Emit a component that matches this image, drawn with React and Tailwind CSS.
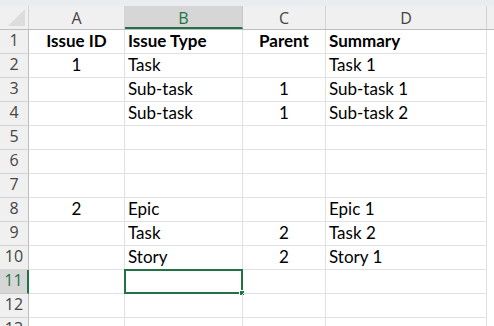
import React from "react";

const cols = [
  { key: "A", w: "w-[96px]", align: "justify-center" },
  { key: "B", w: "w-[118px]", align: "justify-start pl-[3px]" },
  { key: "C", w: "w-[83px]", align: "justify-center" },
  { key: "D", w: "w-[161px]", align: "justify-start pl-[3px]" },
];

const rows = [
  ["Issue ID", "Issue Type", "Parent", "Summary"],
  ["1", "Task", "", "Task 1"],
  ["", "Sub-task", "1", "Sub-task 1"],
  ["", "Sub-task", "1", "Sub-task 2"],
  ["", "", "", ""],
  ["", "", "", ""],
  ["", "", "", ""],
  ["2", "Epic", "", "Epic 1"],
  ["", "Task", "2", "Task 2"],
  ["", "Story", "2", "Story 1"],
  ["", "", "", ""],
  ["", "", "", ""],
  ["", "", "", ""],
];

const App = () => {
  return (
    <div
      className="w-[494px] h-[326px] overflow-hidden bg-white text-black"
      style={{ fontFamily: "Lato, 'Liberation Sans', sans-serif" }}
    >
      <div className="h-[6px] bg-[#e9edf1]" />
      {/* column headers */}
      <div className="flex h-[24px] bg-[#f0f0f0] border-b border-[#bdbdbd]">
        <div className="w-[29px] shrink-0 border-r border-[#d4d4d4] relative">
          <div className="absolute right-[3px] bottom-[3px] w-0 h-0 border-l-[17px] border-l-transparent border-b-[17px] border-b-[#dcdcdc]" />
        </div>
        {cols.map((c) =>
          c.key === "B" ? (
            <div
              key={c.key}
              className={`${c.w} shrink-0 flex items-center justify-center bg-[#d6d6d6] border-r border-[#c8c8c8] border-b-2 border-b-[#217346] text-[#217346] text-[16px] pt-[2px]`}
              style={{ fontFamily: "'Open Sans', sans-serif" }}
            >
              {c.key}
            </div>
          ) : (
            <div
              key={c.key}
              className={`${c.w} shrink-0 flex items-center justify-center border-r border-[#d4d4d4] text-[#444] text-[16px]`}
              style={{ fontFamily: "'Open Sans', sans-serif" }}
            >
              {c.key}
            </div>
          )
        )}
      </div>
      {rows.map((r, i) => {
        const sel = i === 10;
        return (
          <div key={i} className="flex h-[24px]">
            <div
              className={`w-[29px] shrink-0 flex items-end justify-center pb-[1px] text-[16px] border-b ${
                sel
                  ? "bg-[#d6d6d6] text-[#217346] border-r-2 border-r-[#217346] border-b-[#c8c8c8]"
                  : "bg-[#f0f0f0] text-[#444] border-r border-r-[#bdbdbd] border-b-[#d4d4d4]"
              }`}
              style={{ fontFamily: "'Open Sans', sans-serif" }}
            >
              {i + 1}
            </div>
            {cols.map((c, j) => (
              <div
                key={c.key}
                className={`${c.w} shrink-0 flex items-end ${c.align} pb-[2px] text-[17px] leading-[20px] border-r border-b border-[#e1e1e1] relative ${
                  i === 0 ? "font-bold" : ""
                }`}
              >
                {r[j]}
                {sel && c.key === "B" && (
                  <div className="absolute -left-[1px] -top-[1px] w-[119px] h-[25px] border-2 border-[#217346]">
                    <div className="absolute -right-[4px] -bottom-[4px] w-[6px] h-[6px] bg-[#217346] border border-white" />
                  </div>
                )}
              </div>
            ))}
          </div>
        );
      })}
    </div>
  );
};

export default App;
